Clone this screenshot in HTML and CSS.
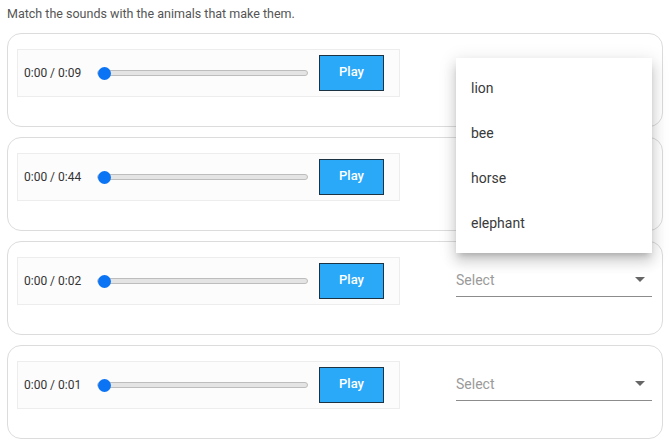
FILE: index.html
```html
<!DOCTYPE html>
<html>
<head>
<meta charset="utf-8">
<link rel="stylesheet" href="styles.css">
</head>
<body>
<div class="page">
  <p class="prompt">Match the sounds with the animals that make them.</p>
  <div class="list">
    <div class="card">
      <div class="player"><span class="time">0:00 / 0:09</span><div class="slider"><span class="thumb"></span></div><button class="play">Play</button></div>
      <div class="select open"><span class="arrow"></span>
        <ul class="menu">
          <li>lion</li><li>bee</li><li>horse</li><li>elephant</li>
        </ul>
      </div>
    </div>
    <div class="card">
      <div class="player"><span class="time">0:00 / 0:44</span><div class="slider"><span class="thumb"></span></div><button class="play">Play</button></div>
      <div class="select covered"><span class="placeholder">Select</span><span class="arrow"></span></div>
    </div>
    <div class="card">
      <div class="player"><span class="time">0:00 / 0:02</span><div class="slider"><span class="thumb"></span></div><button class="play">Play</button></div>
      <div class="select"><span class="placeholder">Select</span><span class="arrow"></span></div>
    </div>
    <div class="card">
      <div class="player"><span class="time">0:00 / 0:01</span><div class="slider"><span class="thumb"></span></div><button class="play">Play</button></div>
      <div class="select"><span class="placeholder">Select</span><span class="arrow"></span></div>
    </div>
  </div>
</div>
</body>
</html>
```
FILE: styles.css
```css
html, body { margin: 0; padding: 0; background: #fff; }
body { font-family: Roboto, "Liberation Sans", sans-serif; color: #333; }
.page { padding: 0 7px; }
.prompt { margin: 0; height: 33px; line-height: 28px; font-size: 12.5px; color: #555; }
.list { display: flex; flex-direction: column; gap: 10px; }
.card {
  height: 94px; box-sizing: border-box;
  border: 1px solid #dcdcdc; border-radius: 14px;
  padding: 15px 10px 0 9px;
  display: flex; align-items: flex-start; gap: 56px;
}
.player {
  width: 383px; height: 48px; box-sizing: border-box;
  border: 1px solid #ededed; background: #fcfcfc;
  display: flex; align-items: center; padding: 0 15px 0 6px;
}
.time { font-size: 12px; color: #333; width: 73px; }
.slider {
  position: relative; width: 211px; height: 6px; box-sizing: border-box;
  background: #e4e4e4; border: 1px solid #bdbdbd; border-radius: 4px;
}
.thumb {
  position: absolute; left: 0; top: 50%; width: 13px; height: 13px;
  margin-top: -6.5px; border-radius: 50%; background: #0b74f4;
}
.play {
  margin-left: auto; width: 65px; height: 36px; box-sizing: border-box;
  background: #2ba9f9; border: 1px solid #1c3344; color: #fff;
  font-family: Roboto, "Liberation Sans", sans-serif; font-weight: 500; font-size: 13px;
  padding: 0 0 3px;
}
.select {
  position: relative; width: 196px; height: 40px; box-sizing: border-box;
  border-bottom: 1px solid #8c8c8c; display: flex; align-items: center; justify-content: space-between;
  padding: 6px 7px 0 0;
}
.select.open { justify-content: flex-end; }
.select.covered .placeholder { visibility: hidden; }
.placeholder { font-size: 14px; color: #9a9a9a; }
.arrow { width: 0; height: 0; border-left: 5px solid transparent; border-right: 5px solid transparent; border-top: 5px solid #666; }
.menu {
  position: absolute; left: 0; top: 9px; width: 196px; margin: 0; padding: 8px 0 7px;
  list-style: none; background: #fff; z-index: 5;
  box-shadow: 0 5px 6px -3px rgba(0,0,0,.18), 0 9px 12px 1px rgba(0,0,0,.12), 0 3px 16px 2px rgba(0,0,0,.1);
}
.menu li { height: 45px; line-height: 45px; padding: 0 15px; font-size: 14px; color: #3a3a3a; }
```
